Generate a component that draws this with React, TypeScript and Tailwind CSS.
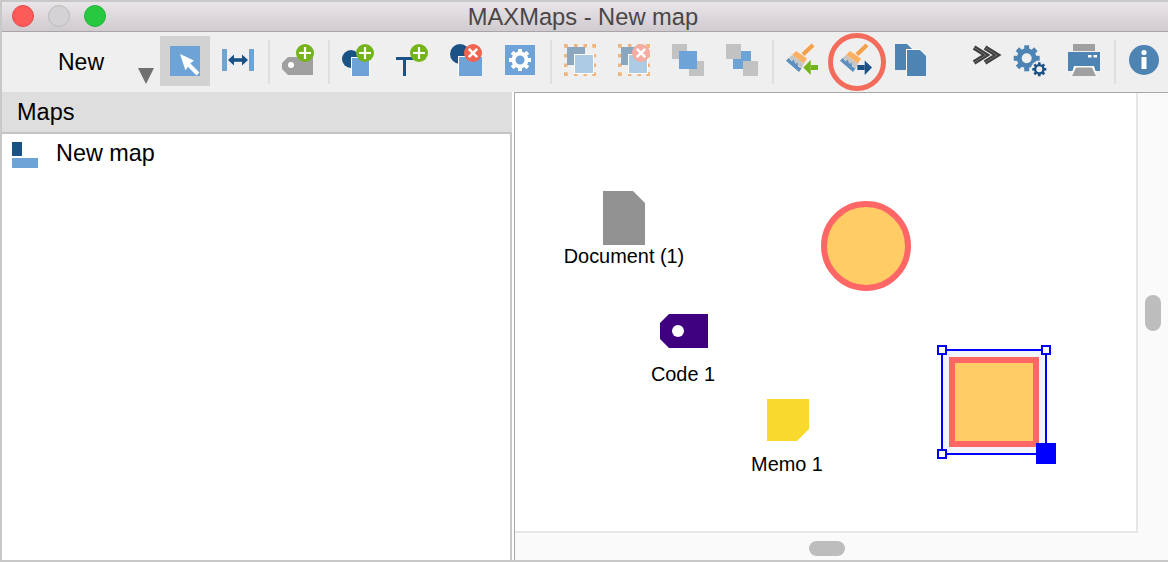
import React from 'react';

const BLUE = '#6ea3d8';
const NAVY = '#1a5286';
const STEEL = '#4d84b4';

const Icon = ({ children, size = 32 }: { children: React.ReactNode; size?: number }) => (
  <svg width={size} height={size} viewBox={`0 0 ${size} ${size}`} className="block overflow-visible">
    {children}
  </svg>
);

const PlusBadge = () => (
  <g>
    <circle cx="23" cy="9" r="9" fill="#72b41a" />
    <path d="M23 3v12M17 9h12" stroke="#fff" strokeWidth="2.2" />
  </g>
);

const CrossBadge = ({ fill = '#f0654f' }: { fill?: string }) => (
  <g>
    <circle cx="23" cy="9" r="9" fill={fill} />
    <path d="M18.8 4.8l8.4 8.4M27.2 4.8l-8.4 8.4" stroke="#fff" strokeWidth="2.6" />
  </g>
);

const Teeth = ({ cx, cy, r, w, h, fill, count = 8 }: { cx: number; cy: number; r: number; w: number; h: number; fill: string; count?: number }) => (
  <g>
    {Array.from({ length: count }).map((_, i) => (
      <rect
        key={i}
        x={cx - w / 2}
        y={cy - r}
        width={w}
        height={h}
        fill={fill}
        transform={`rotate(${(360 / count) * i} ${cx} ${cy})`}
      />
    ))}
  </g>
);

const Brush = () => (
  <g>
    <path d="M27 1L17 10.5" stroke="#f5a04a" strokeWidth="4.2" />
    <polygon points="10,7 21,14.5 18,19.5 6,11" fill="#fbb163" />
    <polygon points="6,11 18,19.5 15.5,24.5 2.5,14" fill="#c6c6c6" />
    <polygon points="0,16.7 2.5,14 6,17.5 7.5,15.5 9.5,20 11.5,18.5 12,22.5 15.5,24.5 13,28" fill="#5a8fc0" />
  </g>
);

const DashedBox = () => (
  <g>
    {[0, 10, 19.5, 28.5].map((p) => (
      <g key={p} fill="#f0b47c">
        <rect x={p} y="0" width="3.5" height="3.5" />
        <rect x={p} y="28.5" width="3.5" height="3.5" />
        <rect x="0" y={p} width="3.5" height="3.5" />
        <rect x="28.5" y={p} width="3.5" height="3.5" />
      </g>
    ))}
    <rect x="3" y="3" width="18" height="18" fill="#8ba7c0" />
    <rect x="10" y="10" width="20" height="20" fill="#fff" />
    <rect x="11" y="11" width="18" height="18" fill="#adcbe3" />
  </g>
);

const Tool = ({ children, last }: { children: React.ReactNode; last?: boolean }) => (
  <div className={`relative flex shrink-0 justify-center pt-[12px] ${last ? 'w-[51px] justify-start pl-[11px]' : 'w-[54px]'}`}>
    {children}
  </div>
);

const Sep = () => <div className="mt-[8px] ml-[3px] mr-[1px] h-[44px] w-[2px] shrink-0 bg-[#e0e0e0]" />;

const Toolbar = () => (
  <div className="flex h-[60px] shrink-0 bg-[#efefef] text-black">
    <div className="relative w-[158px] shrink-0">
      <span className="absolute left-[56px] top-[17px] text-[23px] leading-[26px]">New</span>
      <svg width="16" height="16" className="absolute left-[136px] top-[36px]">
        <polygon points="0,0 16,0 8,16" fill="#707070" />
      </svg>
    </div>
    <div className="mt-[4px] mr-[1px] flex h-[50px] w-[50px] shrink-0 items-center justify-center bg-[#d2d2d2]">
      <svg width="30" height="30" className="block">
        <rect width="30" height="30" fill={BLUE} />
        <polygon points="10,8 24,14.5 19.5,18 15.5,24.5" fill="#fff" />
        <path d="M16 16L28 28" stroke="#fff" strokeWidth="4" />
      </svg>
    </div>
    <Tool>
      <Icon>
        <rect x="0" y="5" width="5" height="22" fill={BLUE} />
        <rect x="27" y="5" width="5" height="22" fill={BLUE} />
        <path d="M9 16h14" stroke={NAVY} strokeWidth="3.6" />
        <polygon points="6,16 12,10.5 12,21.5" fill={NAVY} />
        <polygon points="26,16 20,10.5 20,21.5" fill={NAVY} />
      </Icon>
    </Tool>
    <Sep />
    <Tool>
      <Icon>
        <polygon points="0,19 6,13 31,13 31,31 6,31 0,25" fill="#a0a0a0" />
        <circle cx="9" cy="21" r="3" fill="#fff" />
        <PlusBadge />
      </Icon>
    </Tool>
    <Sep />
    <Tool>
      <Icon>
        <circle cx="9" cy="15" r="9" fill={NAVY} />
        <rect x="9" y="13" width="19" height="19" fill="#fff" />
        <rect x="10" y="14" width="17" height="18" fill={BLUE} />
        <PlusBadge />
      </Icon>
    </Tool>
    <Tool>
      <Icon>
        <rect x="0" y="13" width="17" height="3" fill={NAVY} />
        <rect x="7" y="13" width="3" height="19" fill={NAVY} />
        <PlusBadge />
      </Icon>
    </Tool>
    <Tool>
      <Icon>
        <circle cx="10" cy="10" r="10" fill={NAVY} />
        <rect x="8" y="12" width="24" height="20" fill="#fff" />
        <rect x="9" y="13" width="23" height="19" fill={BLUE} />
        <CrossBadge />
      </Icon>
    </Tool>
    <Tool>
      <Icon>
        <rect x="1" y="1" width="30" height="30" fill={BLUE} />
        <Teeth cx={16} cy={16} r={11} w={4} h={4} fill="#fff" />
        <circle cx="16" cy="16" r="6.5" fill="none" stroke="#fff" strokeWidth="4" />
      </Icon>
    </Tool>
    <Sep />
    <Tool>
      <Icon>
        <DashedBox />
      </Icon>
    </Tool>
    <Tool>
      <Icon>
        <DashedBox />
        <CrossBadge fill="#f4ada3" />
      </Icon>
    </Tool>
    <Tool>
      <Icon>
        <rect x="0" y="0" width="15" height="15" fill="#c2c2c2" />
        <rect x="17" y="17" width="15" height="15" fill="#c2c2c2" />
        <rect x="7" y="7" width="18" height="18" fill={BLUE} />
      </Icon>
    </Tool>
    <Tool>
      <Icon>
        <rect x="7" y="7" width="18" height="18" fill={BLUE} />
        <rect x="0" y="0" width="15" height="15" fill="#c2c2c2" />
        <rect x="17" y="17" width="15" height="15" fill="#c2c2c2" />
      </Icon>
    </Tool>
    <Sep />
    <Tool>
      <Icon>
        <Brush />
        <rect x="24.7" y="21" width="7.3" height="5" fill="#72b41a" />
        <polygon points="17.3,23.5 24.7,16 24.7,31" fill="#72b41a" />
      </Icon>
    </Tool>
    <Tool>
      <Icon>
        <Brush />
        <rect x="17.3" y="21" width="7.4" height="5" fill={NAVY} />
        <polygon points="24.7,16.5 32,23.5 24.7,31" fill={NAVY} />
      </Icon>
      <div className="absolute left-[-1px] top-[1px] h-[58px] w-[58px] rounded-full border-[5px] border-[#f26b5b]" />
    </Tool>
    <Tool>
      <Icon>
        <polygon points="1,0 13,0 18,5 18,26 1,26" fill={STEEL} />
        <polygon points="12,5 26,5 32,11 32,32 12,32" fill="#fff" />
        <polygon points="13,6 26,6 32,12 32,32 13,32" fill={STEEL} />
      </Icon>
    </Tool>
    <div className="ml-[33px] mr-[1px] w-[32px] shrink-0 pt-[12px]">
      <Icon>
        <path d="M4 3.5L16 11L4 18.5M15 3.5L27 11L15 18.5" fill="none" stroke="#404040" strokeWidth="4.8" />
        <path d="M4 3.5L16 11L4 18.5M15 3.5L27 11L15 18.5" fill="none" stroke="#6e6e6e" strokeWidth="1" />
      </Icon>
    </div>
    <Tool>
      <Icon>
        <Teeth cx={12.7} cy={14.3} r={13} w={5} h={5} fill={STEEL} />
        <circle cx="12.7" cy="14.3" r="7.5" fill="none" stroke={STEEL} strokeWidth="5" />
        <circle cx="25.3" cy="25.3" r="8.5" fill="#efefef" />
        <Teeth cx={25.3} cy={25.3} r={7} w={2.6} h={2.5} fill={NAVY} />
        <circle cx="25.3" cy="25.3" r="4.2" fill="none" stroke={NAVY} strokeWidth="2.4" />
      </Icon>
    </Tool>
    <Tool>
      <Icon>
        <rect x="5" y="0" width="22" height="7" fill="#a0a0a0" />
        <rect x="0" y="8" width="32" height="19" fill={STEEL} />
        <rect x="20" y="11" width="3.5" height="2.5" fill="#fff" />
        <rect x="25.5" y="11" width="3.5" height="2.5" fill="#fff" />
        <polygon points="6,22 26,22 29,32 3,32" fill="#fff" />
        <polygon points="8,23.5 24,23.5 28,32 4,32" fill="#a0a0a0" />
      </Icon>
    </Tool>
    <Sep />
    <Tool last>
      <Icon>
        <circle cx="16" cy="16" r="15" fill={STEEL} />
        <circle cx="16" cy="8.5" r="2.6" fill="#fff" />
        <rect x="13.5" y="13" width="5" height="12" fill="#fff" />
      </Icon>
    </Tool>
  </div>
);

const Label = ({ className, children }: { className: string; children: React.ReactNode }) => (
  <span className={`absolute -translate-x-1/2 whitespace-nowrap text-[19.9px] leading-[24px] text-black ${className}`}>
    {children}
  </span>
);

const Handle = ({ className }: { className: string }) => (
  <div className={`absolute h-[10px] w-[10px] border-2 border-[#0000ff] bg-white ${className}`} />
);

const Canvas = () => (
  <div className="relative flex-1 border-b-2 border-r-2 border-[#e6e6e6] bg-white">
    {/* document */}
    <svg width="42" height="54" className="absolute left-[88px] top-[98px]">
      <polygon points="0,0 30,0 42,12 42,54 0,54" fill="#929292" />
    </svg>
    <Label className="left-[109px] top-[151px]">Document (1)</Label>

    {/* circle */}
    <div className="absolute left-[306px] top-[108px] h-[90px] w-[90px] rounded-full border-[6px] border-[#ff6666] bg-[#ffcc66]" />

    {/* code */}
    <svg width="48" height="34" className="absolute left-[145px] top-[221px]">
      <polygon points="9,0 48,0 48,34 9,34 0,25 0,9" fill="#3f0080" />
      <circle cx="18" cy="17" r="6" fill="#fff" />
    </svg>
    <Label className="left-[168px] top-[269px]">Code 1</Label>

    {/* memo */}
    <svg width="42" height="42" className="absolute left-[252px] top-[306px]">
      <polygon points="0,0 42,0 42,30 30,42 0,42" fill="#fad92f" />
    </svg>
    <Label className="left-[272px] top-[359px]">Memo 1</Label>

    {/* selected square */}
    <div className="absolute left-[426px] top-[256px] h-[106px] w-[106px] border-2 border-[#0000ff] bg-[#f3f3fb]" />
    <div className="absolute left-[434px] top-[264px] h-[90px] w-[90px] border-[6px] border-[#ff6666] bg-[#ffcc66]" />
    <Handle className="left-[422px] top-[252px]" />
    <Handle className="left-[526px] top-[252px]" />
    <Handle className="left-[422px] top-[356px]" />
    <div className="absolute left-[521px] top-[350px] h-[21px] w-[20px] bg-[#0000ff]" />
  </div>
);

export default function App() {
  return (
    <div className="flex h-[562px] w-[1168px] flex-col overflow-hidden border-l-2 border-t-2 border-b-2 border-[#c8c8c8] font-['Liberation_Sans',Arial,sans-serif]">
      <div className="relative flex h-[30px] shrink-0 items-center justify-center border-b border-[#a8a4a8] bg-gradient-to-b from-[#e9e5e9] to-[#cfcbcf]">
        <div className="absolute left-[10px] top-[3px] flex gap-[14px]">
          <div className="h-[22px] w-[22px] rounded-full border border-[#e5484a] bg-[#fc5b57]" />
          <div className="h-[22px] w-[22px] rounded-full border border-[#bcbcbc] bg-[#d4d2d4]" />
          <div className="h-[22px] w-[22px] rounded-full border border-[#22b33a] bg-[#28c940]" />
        </div>
        <span className="ml-[-4px] text-[23.7px] leading-[28px] text-[#4a4648]">MAXMaps - New map</span>
      </div>
      <Toolbar />
      <div className="flex min-h-0 flex-1 bg-white">
        <div className="flex w-[510px] shrink-0 flex-col">
          <div className="flex h-[42px] shrink-0 items-center border-b-2 border-[#c4c4c4] bg-[#dedede] pl-[15px] pt-[2px] text-[23.5px] text-black">
            Maps
          </div>
          <div className="flex flex-1 items-start border-r-2 border-[#c8c8c8] pt-[6px] pl-[10px]">
            <svg width="26" height="28" className="block shrink-0">
              <rect x="0" y="2" width="10" height="14" fill={NAVY} />
              <rect x="0" y="18" width="26" height="10" fill={BLUE} />
            </svg>
            <span className="ml-[18px] mt-[-1px] text-[23.4px] leading-[28px] text-black">New map</span>
          </div>
        </div>
        <div className="ml-[2px] flex min-w-0 flex-1 flex-col border-l border-t border-[#a8a8a8] bg-[#fafafa]">
          <div className="flex min-h-0 flex-1">
            <Canvas />
            <div className="relative w-[30px] shrink-0">
              <div className="absolute left-[7px] top-[202px] h-[36px] w-[16px] rounded-full bg-[#bdbdbd]" />
            </div>
          </div>
          <div className="flex h-[27px] shrink-0 justify-center pr-[30px] pt-[8px]">
            <div className="h-[15px] w-[36px] rounded-full bg-[#bdbdbd]" />
          </div>
        </div>
      </div>
    </div>
  );
}
